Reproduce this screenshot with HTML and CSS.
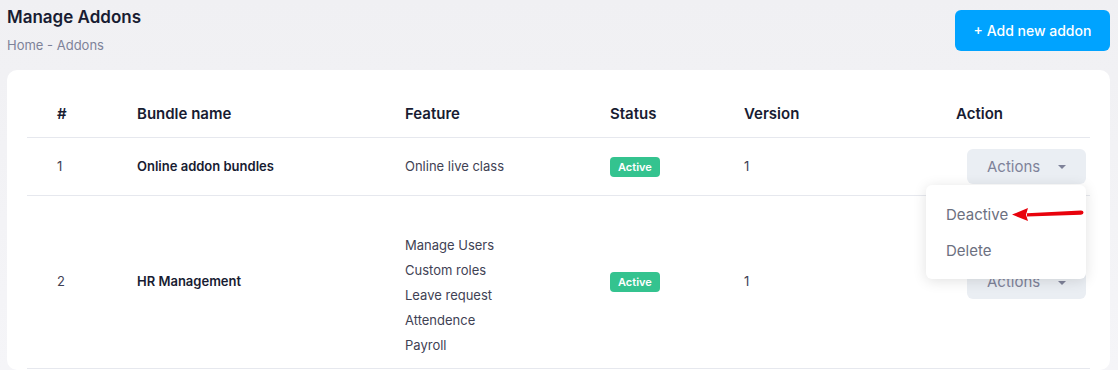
FILE: index.html
```html
<!DOCTYPE html>
<html lang="en">
<head>
  <meta charset="UTF-8">
  <meta name="viewport" content="width=device-width, initial-scale=1.0">
  <title>Manage Addons</title>
  <link rel="stylesheet" href="styles.css">
</head>
<body>

<div class="page-header">
  <div class="page-title-wrap">
    <h1 class="page-title">Manage Addons</h1>
    <div class="breadcrumb">Home - Addons</div>
  </div>
  <button class="btn-add-addon">+ Add new addon</button>
</div>

<div class="addon-card">
  <table class="addon-table">
    <colgroup>
      <col class="col-num">
      <col class="col-name">
      <col class="col-feature">
      <col class="col-status">
      <col class="col-version">
      <col class="col-action">
    </colgroup>
    <thead>
      <tr>
        <th>#</th>
        <th>Bundle name</th>
        <th>Feature</th>
        <th>Status</th>
        <th>Version</th>
        <th>Action</th>
      </tr>
    </thead>
    <tbody>
      <tr>
        <td>1</td>
        <td class="bundle-name">Online addon bundles</td>
        <td>Online live class</td>
        <td><span class="badge-active">Active</span></td>
        <td>1</td>
        <td class="td-action">
          <div class="action-dropdown">
            <button class="btn-actions">Actions <span class="caret"></span></button>
            <div class="dropdown-menu">
              <div class="dropdown-item">Deactive</div>
              <div class="dropdown-item">Delete</div>
              <svg class="pointer-arrow" viewBox="0 0 74 16" width="74" height="16">
                <path d="M16 6.2 L70 3.6 Q72.5 3.6 72.5 5.6 Q72.5 7.6 70 7.8 L16 9.6 Z" fill="#e8020c"/>
                <path d="M1 7.6 L17 1 L15 7.8 L17 14 Z" fill="#e8020c"/>
              </svg>
            </div>
          </div>
        </td>
      </tr>
      <tr>
        <td>2</td>
        <td class="bundle-name">HR Management</td>
        <td class="td-features">
          <div class="feature-item">Manage Users</div>
          <div class="feature-item">Custom roles</div>
          <div class="feature-item">Leave request</div>
          <div class="feature-item">Attendence</div>
          <div class="feature-item">Payroll</div>
        </td>
        <td><span class="badge-active">Active</span></td>
        <td>1</td>
        <td class="td-action">
          <div class="action-dropdown">
            <button class="btn-actions">Actions <span class="caret"></span></button>
          </div>
        </td>
      </tr>
    </tbody>
  </table>
</div>

</body>
</html>
```
FILE: styles.css
```css
* {
  margin: 0;
  padding: 0;
  box-sizing: border-box;
}

body {
  font-family: Inter, "Noto Sans", sans-serif;
  background: linear-gradient(180deg, #f0f0f3 0%, #f5f5f8 100%);
  color: #3f4254;
  padding: 0 8px 0 7px;
  min-height: 100vh;
}

.page-header {
  display: flex;
  justify-content: space-between;
  align-items: flex-start;
  height: 70px;
}

.page-title-wrap {
  padding-top: 7px;
}

.page-title {
  font-size: 17px;
  font-weight: 600;
  color: #181c32;
  line-height: 20px;
}

.breadcrumb {
  margin-top: 10px;
  font-size: 13px;
  color: #7e8299;
  line-height: 16px;
}

.btn-add-addon {
  margin-top: 10px;
  width: 155px;
  height: 41px;
  background-color: #00a3ff;
  color: white;
  border: none;
  border-radius: 6px;
  font-family: inherit;
  font-size: 14px;
  font-weight: 500;
  cursor: pointer;
}

.addon-card {
  background-color: white;
  border-radius: 10px;
  padding: 20px 20px 0 20px;
  min-height: 300px;
}

.addon-table {
  width: 100%;
  border-collapse: collapse;
  table-layout: fixed;
}

.col-num { width: 80px; }
.col-name { width: 268px; }
.col-feature { width: 205px; }
.col-status { width: 134px; }
.col-version { width: 212px; }
.col-action { width: 164px; }

.addon-table th {
  text-align: left;
  font-size: 15px;
  font-weight: 600;
  color: #181c32;
  height: 47px;
  padding: 0 0 0 30px;
  border-bottom: 1px solid #e6e8ee;
}

.addon-table td {
  font-size: 13px;
  line-height: 22px;
  padding: 17px 0 18px 30px;
  vertical-align: middle;
  border-bottom: 1px solid #e6e8ee;
}

.addon-table .bundle-name {
  font-weight: 600;
  color: #181c32;
}

.addon-table .td-features {
  padding: 37px 0 10px 30px;
}

.feature-item {
  line-height: 25px;
}

.badge-active {
  display: inline-block;
  background-color: #34c38f;
  color: white;
  font-size: 11px;
  font-weight: 600;
  line-height: 20px;
  padding: 0 8px;
  border-radius: 4px;
}

.addon-table .td-action {
  padding: 8px 4px 8px 30px;
  text-align: right;
}

.action-dropdown {
  position: relative;
  display: inline-block;
}

.btn-actions {
  width: 119px;
  height: 35px;
  background-color: #eaeef3;
  color: #7e8299;
  border: none;
  border-radius: 6px;
  font-family: inherit;
  font-size: 15px;
  text-align: left;
  padding-left: 20px;
}

.caret {
  display: inline-block;
  margin-left: 14px;
  vertical-align: middle;
  border-left: 4px solid transparent;
  border-right: 4px solid transparent;
  border-top: 4px solid #7e8299;
}

.dropdown-menu {
  position: absolute;
  top: 36px;
  right: 0;
  width: 160px;
  background-color: white;
  border-radius: 6px;
  box-shadow: 0 2px 14px rgba(0, 0, 0, 0.12);
  padding: 12px 0 10px;
  text-align: left;
  z-index: 2;
}

.dropdown-item {
  font-size: 15px;
  line-height: 36px;
  color: #6c7080;
  padding-left: 20px;
}

.pointer-arrow {
  position: absolute;
  left: 85px;
  top: 22px;
}
```
